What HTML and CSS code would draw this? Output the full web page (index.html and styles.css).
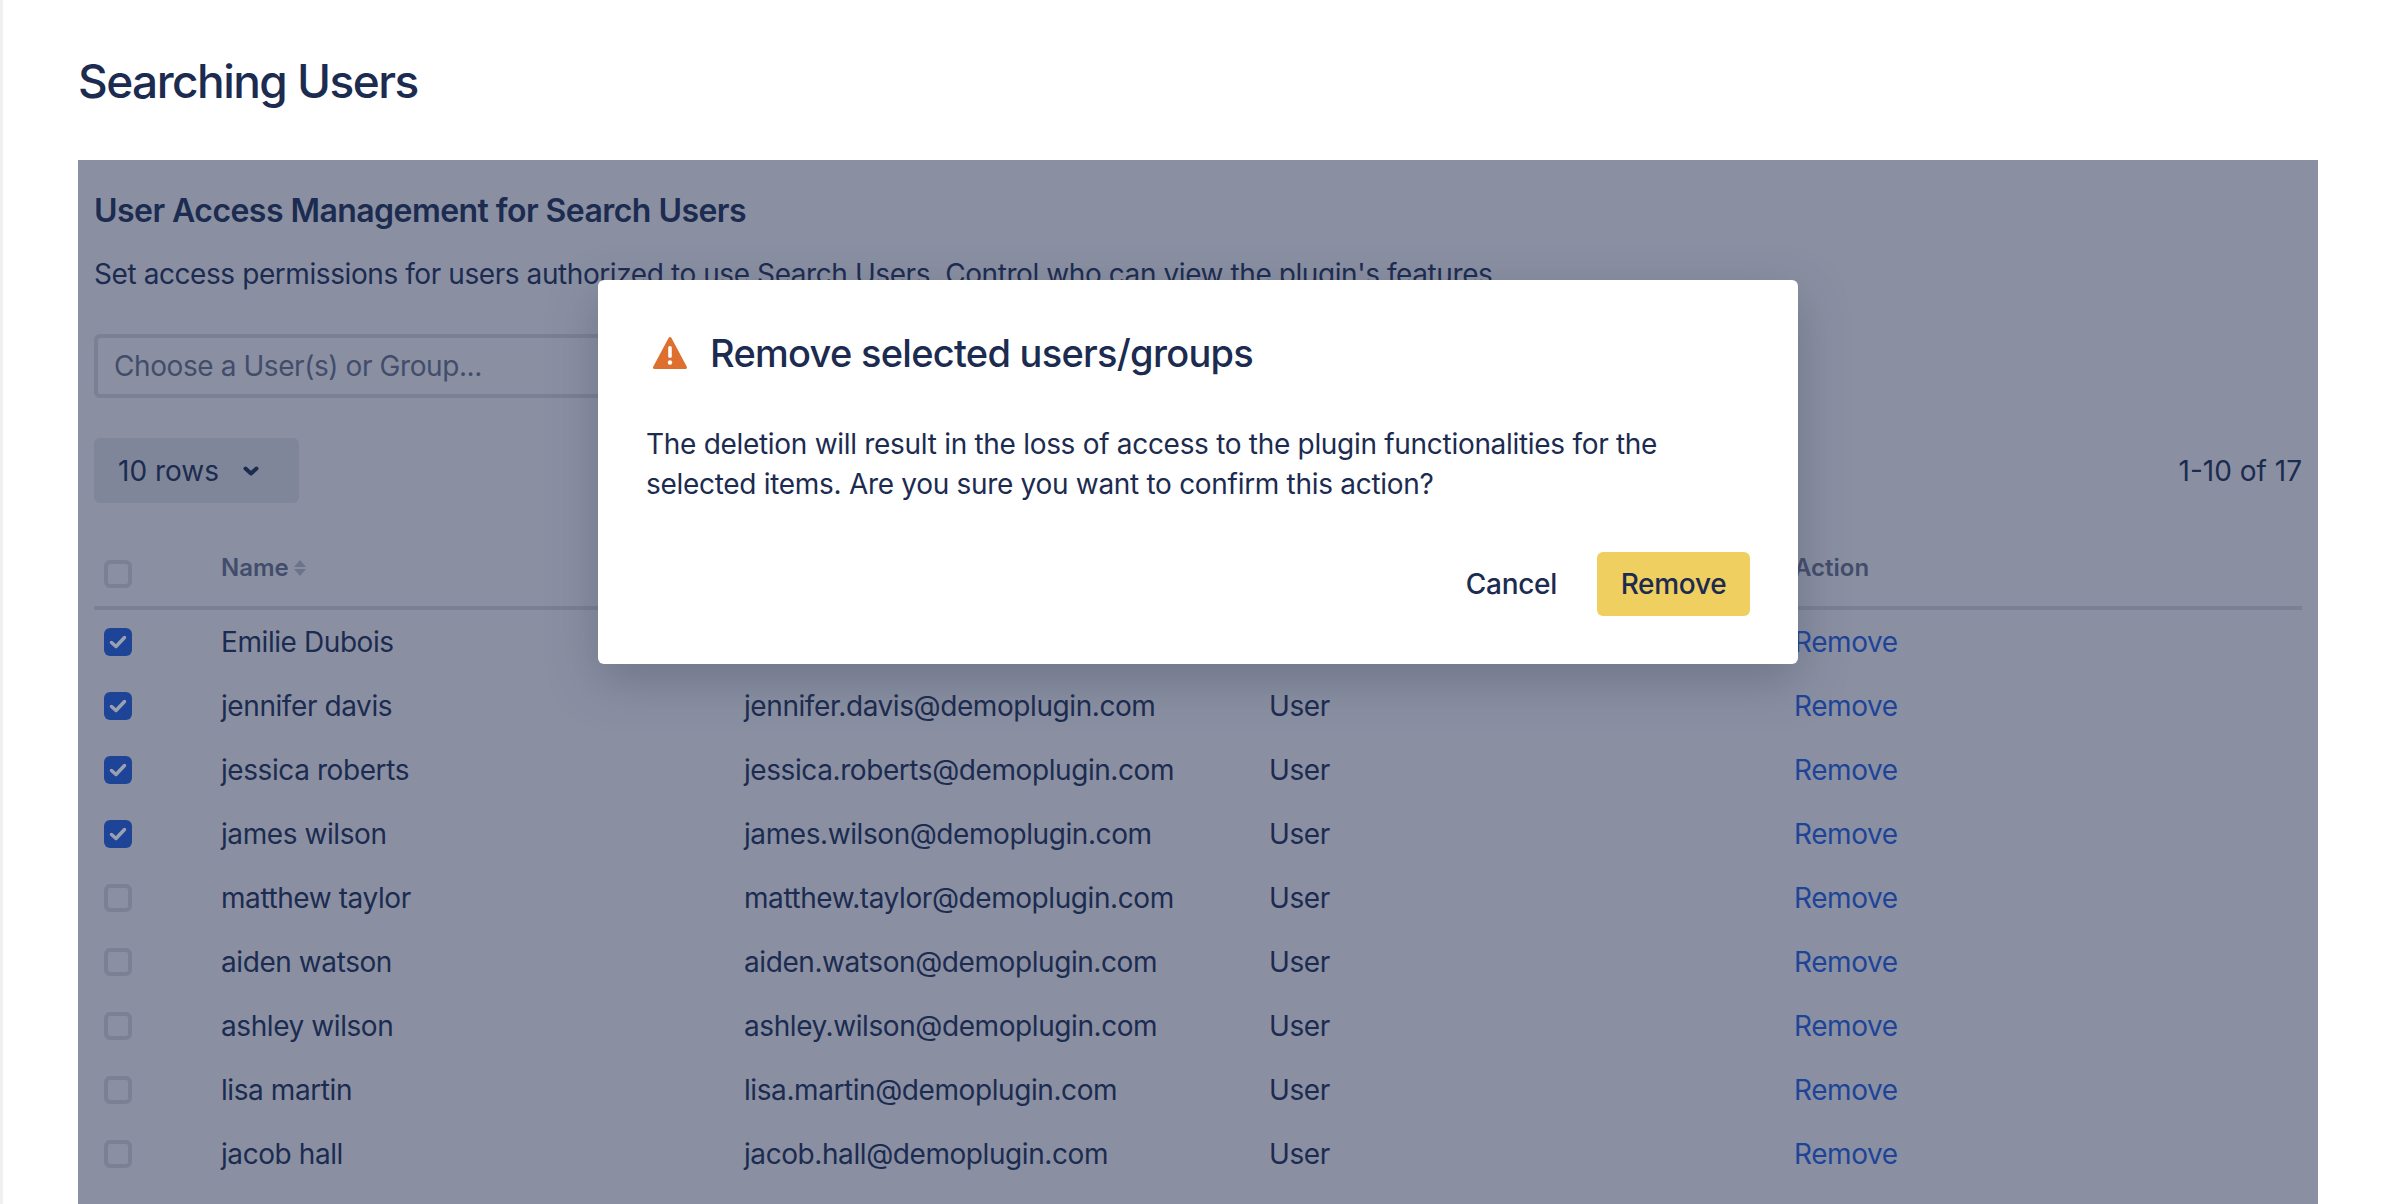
FILE: index.html
```html
<!DOCTYPE html>
<html lang="en">
<head>
    <meta charset="utf-8"/>
    <title>Searching Users</title>
    <link rel="stylesheet" href="styles.css">
</head>

<body>

<div class="page">
    <h1 class="page-title">Searching Users</h1>

    <div class="panel">
        <h2 class="panel-title">User Access Management for Search Users</h2>
        <p class="panel-desc">Set access permissions for users authorized to use Search Users. Control who can view the plugin's features.</p>

        <div class="picker">Choose a User(s) or Group...</div>

        <div class="toolbar">
            <div class="rows-select">
                10 rows
                <svg class="chevron" width="16" height="10" viewBox="0 0 16 10"><path d="M2.5 2.5L8 7.5l5.5-5" fill="none" stroke="#1c2b50" stroke-width="4" stroke-linecap="round" stroke-linejoin="round"/></svg>
            </div>
            <div class="pager">1-10 of 17</div>
        </div>

        <div class="grid-row head">
            <span class="box"></span>
            <span class="head-name">Name
                <svg class="sort" width="12" height="16" viewBox="0 0 12 16"><path d="M6 0l6 7H0zM0 9h12l-6 7z" fill="#6c748b"/></svg>
            </span>
            <span></span>
            <span></span>
            <span>Action</span>
        </div>

        <div class="grid-row">
            <span class="box on"><svg width="18" height="14" viewBox="0 0 18 14"><path d="M2.5 7.5l4.5 4 8.5-9" fill="none" stroke="#9aa0b0" stroke-width="3.5" stroke-linecap="round" stroke-linejoin="round"/></svg></span>
            <span>Emilie Dubois</span>
            <span>emilie.dubois@demoplugin.com</span>
            <span>User</span>
            <a class="link">Remove</a>
        </div>
        <div class="grid-row">
            <span class="box on"><svg width="18" height="14" viewBox="0 0 18 14"><path d="M2.5 7.5l4.5 4 8.5-9" fill="none" stroke="#9aa0b0" stroke-width="3.5" stroke-linecap="round" stroke-linejoin="round"/></svg></span>
            <span>jennifer davis</span>
            <span>jennifer.davis@demoplugin.com</span>
            <span>User</span>
            <a class="link">Remove</a>
        </div>
        <div class="grid-row">
            <span class="box on"><svg width="18" height="14" viewBox="0 0 18 14"><path d="M2.5 7.5l4.5 4 8.5-9" fill="none" stroke="#9aa0b0" stroke-width="3.5" stroke-linecap="round" stroke-linejoin="round"/></svg></span>
            <span>jessica roberts</span>
            <span>jessica.roberts@demoplugin.com</span>
            <span>User</span>
            <a class="link">Remove</a>
        </div>
        <div class="grid-row">
            <span class="box on"><svg width="18" height="14" viewBox="0 0 18 14"><path d="M2.5 7.5l4.5 4 8.5-9" fill="none" stroke="#9aa0b0" stroke-width="3.5" stroke-linecap="round" stroke-linejoin="round"/></svg></span>
            <span>james wilson</span>
            <span>james.wilson@demoplugin.com</span>
            <span>User</span>
            <a class="link">Remove</a>
        </div>
        <div class="grid-row">
            <span class="box"></span>
            <span>matthew taylor</span>
            <span>matthew.taylor@demoplugin.com</span>
            <span>User</span>
            <a class="link">Remove</a>
        </div>
        <div class="grid-row">
            <span class="box"></span>
            <span>aiden watson</span>
            <span>aiden.watson@demoplugin.com</span>
            <span>User</span>
            <a class="link">Remove</a>
        </div>
        <div class="grid-row">
            <span class="box"></span>
            <span>ashley wilson</span>
            <span>ashley.wilson@demoplugin.com</span>
            <span>User</span>
            <a class="link">Remove</a>
        </div>
        <div class="grid-row">
            <span class="box"></span>
            <span>lisa martin</span>
            <span>lisa.martin@demoplugin.com</span>
            <span>User</span>
            <a class="link">Remove</a>
        </div>
        <div class="grid-row">
            <span class="box"></span>
            <span>jacob hall</span>
            <span>jacob.hall@demoplugin.com</span>
            <span>User</span>
            <a class="link">Remove</a>
        </div>
    </div>
</div>

<div class="modal">
    <div class="modal-head">
        <svg class="warn" width="36" height="34" viewBox="0 0 36 34">
            <path d="M18 2.5L33.5 31.5H2.5z" fill="#dd6f2f" stroke="#dd6f2f" stroke-width="3" stroke-linejoin="round"/>
            <rect x="16.2" y="10" width="3.6" height="12" rx="1.8" fill="#fff"/>
            <circle cx="18" cy="26.5" r="2.2" fill="#fff"/>
        </svg>
        <h3 class="modal-title">Remove selected users/groups</h3>
    </div>
    <p class="modal-text">The deletion will result in the loss of access to the plugin functionalities for the selected items. Are you sure you want to confirm this action?</p>
    <div class="modal-foot">
        <button class="btn">Cancel</button>
        <button class="btn btn-warn">Remove</button>
    </div>
</div>

</body>
</html>
```

FILE: styles.css
```css
html, body {
    margin: 0;
    height: 100%;
    overflow: hidden;
    background: #fff;
}

body {
    font-family: Inter, "Liberation Sans", sans-serif;
    font-size: 28px;
    line-height: 40px;
    letter-spacing: -0.42px;
    color: #1c2b50;
}

.page {
    box-sizing: border-box;
    height: 1204px;
    border-left: 3px solid #f0f0f1;
    padding: 52px 64px 0 75px;
}

.page-title {
    margin: 0 0 48px;
    font-size: 46px;
    line-height: 58px;
    font-weight: 500;
    letter-spacing: -1.55px;
    padding-bottom: 2px;
}

.panel {
    height: 1100px;
    box-sizing: border-box;
    padding: 31px 16px 0;
    background: #8a90a2;
}

.panel-title {
    margin: 0 0 23px;
    font-size: 32px;
    line-height: 40px;
    font-weight: 600;
    letter-spacing: -0.55px;
}

.panel-desc {
    margin: 0 0 40px;
}

.picker {
    box-sizing: border-box;
    width: 1400px;
    height: 64px;
    padding: 0 16px;
    border: 4px solid #7a8194;
    border-radius: 6px;
    line-height: 56px;
    color: #424d6b;
}

.toolbar {
    display: flex;
    justify-content: space-between;
    align-items: center;
    margin-top: 40px;
    height: 65px;
    letter-spacing: 0;
}

.rows-select {
    display: flex;
    align-items: center;
    gap: 24px;
    box-sizing: border-box;
    width: 205px;
    height: 65px;
    padding-left: 24px;
    border-radius: 6px;
    background: #7f8699;
}

.grid-row {
    display: grid;
    grid-template-columns: 127px 523px 525px 525px 1fr;
    align-items: center;
    height: 64px;
}

.grid-row.head {
    height: 85px;
    padding-bottom: 18px;
    border-bottom: 4px solid #7a8194;
    font-size: 24px;
    font-weight: 600;
    letter-spacing: 0;
    color: #424d6b;
    align-items: end;
}

.head-name {
    display: flex;
    align-items: center;
    gap: 5px;
}

.box {
    display: flex;
    align-items: center;
    justify-content: center;
    box-sizing: border-box;
    width: 28px;
    height: 28px;
    margin-left: 10px;
    border: 4px solid #7a8194;
    border-radius: 6px;
}

.box.on {
    border: 0;
    background: #1e4498;
}

.link {
    color: #1e4498;
}

.modal {
    position: absolute;
    left: 598px;
    top: 280px;
    box-sizing: border-box;
    width: 1200px;
    height: 384px;
    padding: 48px;
    border-radius: 6px;
    background: #fff;
    box-shadow: 0 16px 48px rgba(60, 66, 90, 0.35);
}

.modal-head {
    display: flex;
    align-items: center;
    gap: 22px;
    margin-left: 6px;
    height: 50px;
}

.modal-title {
    margin: 0;
    font-size: 38px;
    line-height: 50px;
    font-weight: 500;
    letter-spacing: -0.72px;
}

.modal-text {
    margin: 46px 0 0;
    letter-spacing: -0.3px;
}

.modal-foot {
    display: flex;
    justify-content: flex-end;
    align-items: center;
    gap: 40px;
    margin-top: 48px;
}

.btn {
    height: 64px;
    padding: 0;
    border: 0;
    border-radius: 6px;
    background: none;
    font: 500 28px Inter, "Liberation Sans", sans-serif;
    letter-spacing: -0.3px;
    color: #1c2b50;
}

.btn-warn {
    width: 153px;
    background: #efcf60;
}
```
